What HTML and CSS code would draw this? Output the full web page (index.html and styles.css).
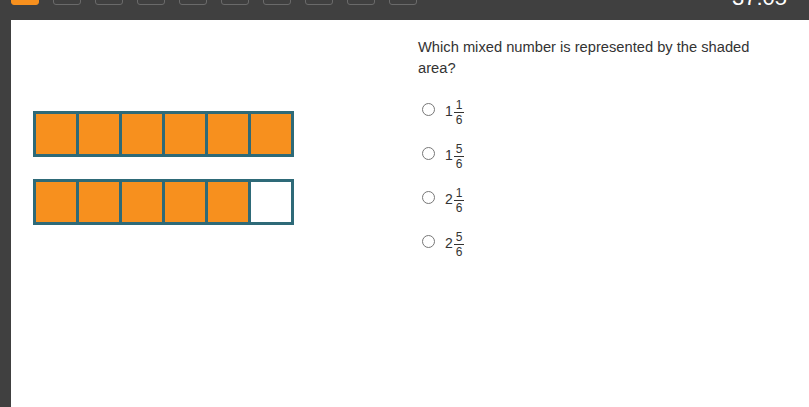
FILE: index.html
```html
<!DOCTYPE html>
<html>
<head>
<meta charset="utf-8">
<link rel="stylesheet" href="styles.css">
</head>
<body>
<div class="topbar">
  <div class="tabs">
    <span class="tab tab-active"></span>
    <span class="tab"></span>
    <span class="tab"></span>
    <span class="tab"></span>
    <span class="tab"></span>
    <span class="tab"></span>
    <span class="tab"></span>
    <span class="tab"></span>
    <span class="tab"></span>
    <span class="tab"></span>
  </div>
  <div class="timer">37:05</div>
</div>
<div class="page">
  <div class="figure">
    <div class="bar">
      <span class="cell"></span><span class="cell"></span><span class="cell"></span><span class="cell"></span><span class="cell"></span><span class="cell"></span>
    </div>
    <div class="bar">
      <span class="cell"></span><span class="cell"></span><span class="cell"></span><span class="cell"></span><span class="cell"></span><span class="cell empty"></span>
    </div>
  </div>
  <div class="question">
    <p class="prompt">Which mixed number is represented by the shaded area?</p>
    <ul class="options">
      <li class="option"><span class="radio"></span><span class="whole">1</span><span class="frac"><span class="num">1</span><span class="den">6</span></span></li>
      <li class="option"><span class="radio"></span><span class="whole">1</span><span class="frac"><span class="num">5</span><span class="den">6</span></span></li>
      <li class="option"><span class="radio"></span><span class="whole">2</span><span class="frac"><span class="num">1</span><span class="den">6</span></span></li>
      <li class="option"><span class="radio"></span><span class="whole">2</span><span class="frac"><span class="num">5</span><span class="den">6</span></span></li>
    </ul>
  </div>
</div>
</body>
</html>
```
FILE: styles.css
```css
html, body {
  margin: 0;
  padding: 0;
  height: 100%;
  overflow: hidden;
}
body {
  background: #404040;
  font-family: "Liberation Sans", Arial, sans-serif;
  color: #333;
}
.topbar {
  height: 20px;
  display: flex;
  justify-content: space-between;
  align-items: flex-start;
  overflow: hidden;
}
.tabs {
  display: flex;
  gap: 14px;
  padding-left: 11px;
  margin-top: -6px;
}
.tab {
  width: 26px;
  height: 9px;
  border: 1px solid #6a6a6a;
  border-radius: 3px;
  box-sizing: content-box;
}
.tab-active {
  background: #f7901e;
  border-color: #f7901e;
}
.timer {
  color: #fff;
  font-size: 22px;
  line-height: 22px;
  margin-top: -13px;
  padding-right: 22px;
}
.page {
  margin-left: 11px;
  background: #fff;
  height: 387px;
  display: flex;
}
.figure {
  width: 385px;
  padding-left: 22px;
  padding-top: 91px;
  display: flex;
  flex-direction: column;
  gap: 22px;
}
.bar {
  display: flex;
  gap: 3px;
  padding: 3px;
  background: #2e6a78;
  width: max-content;
}
.cell {
  width: 40px;
  height: 40px;
  background: #f7901e;
}
.cell.empty {
  background: #fff;
}
.question {
  padding-top: 17px;
  width: 360px;
}
.prompt {
  margin: 0;
  font-size: 14.7px;
  line-height: 21px;
  color: #333;
  width: 350px;
}
.options {
  list-style: none;
  margin: 20px 0 0 0;
  padding: 0;
  display: flex;
  flex-direction: column;
  gap: 18px;
}
.option {
  display: flex;
  align-items: center;
  height: 26px;
  padding-left: 4px;
}
.radio {
  width: 11px;
  height: 11px;
  border: 1px solid #777;
  border-radius: 50%;
  margin-right: 10px;
  margin-top: -6px;
}
.whole {
  font-size: 14px;
  color: #333;
  margin-top: -2px;
}
.frac {
  display: inline-flex;
  flex-direction: column;
  align-items: center;
  font-size: 12px;
  line-height: 11px;
  margin-left: 1px;
  margin-top: 2px;
  color: #333;
}
.num {
  border-bottom: 1px solid #333;
  padding: 0 2px 1px;
}
.den {
  padding-top: 2px;
}
```
